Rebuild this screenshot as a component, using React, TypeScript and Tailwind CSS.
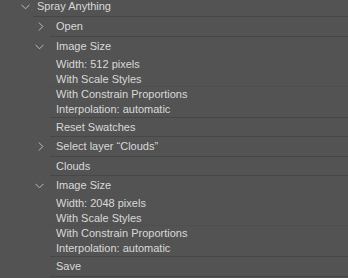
const ChevronDown = () => (
  <svg className="w-[9px] h-[6px] text-[#bdbdbd]" viewBox="0 0 9 6" fill="none" stroke="currentColor">
    <path d="M0.5 0.8L4.5 4.8L8.5 0.8" strokeWidth="1" />
  </svg>
);

const ChevronRight = () => (
  <svg className="w-[6px] h-[9px] text-[#bdbdbd]" viewBox="0 0 6 9" fill="none" stroke="currentColor">
    <path d="M0.8 0.5L4.8 4.5L0.8 8.5" strokeWidth="1" />
  </svg>
);

type Step = {
  title: string;
  chevron?: "down" | "right";
  details?: string[];
  h?: string;
};

const steps: Step[] = [
  { title: "Open", chevron: "right", h: "h-[19px]" },
  {
    title: "Image Size",
    chevron: "down",
    details: ["Width: 512 pixels", "With Scale Styles", "With Constrain Proportions", "Interpolation: automatic"],
  },
  { title: "Reset Swatches", h: "h-[18px]" },
  { title: "Select layer \u201cClouds\u201d", chevron: "right", h: "h-[19px]" },
  { title: "Clouds", h: "h-[18px]" },
  {
    title: "Image Size",
    chevron: "down",
    details: ["Width: 2048 pixels", "With Scale Styles", "With Constrain Proportions", "Interpolation: automatic"],
  },
  { title: "Save", h: "h-[19px]" },
];

export default function App() {
  return (
    <div
      className="w-[348px] h-[278px] overflow-hidden bg-[#535353] text-[#d9d9d9] text-[11px]"
      style={{ fontFamily: '"Liberation Sans", Arial, sans-serif' }}
    >
      <div className="flex -mt-[3px]">
        <div className="w-[33px] flex items-center justify-end pr-[3px] h-[19px]">
          <ChevronDown />
        </div>
        <div className="flex-1 h-[19px] flex items-center pl-[4px]">Spray Anything</div>
      </div>
      <div className="ml-[33px] h-px bg-[#474747]" />

      {steps.map((step, i) => (
        <div key={i} className="flex">
          <div className="w-[50px] shrink-0">
            <div className="h-[19px] flex items-center justify-end pr-[6px]">
              {step.chevron === "down" && <ChevronDown />}
              {step.chevron === "right" && <ChevronRight />}
            </div>
          </div>
          <div className="flex-1 border-b border-[#474747]">
            <div className={`${step.h ?? "h-[19px]"} flex items-center pl-[6px]`}>{step.title}</div>
            {step.details &&
              step.details.map((d, j) => (
                <div
                  key={j}
                  className={`h-[15.5px] flex items-center pl-[6px] ${j === 2 ? "border-t border-[#4f4f4f] -mt-px" : ""}`}
                >
                  {d}
                </div>
              ))}
          </div>
        </div>
      ))}
    </div>
  );
}
